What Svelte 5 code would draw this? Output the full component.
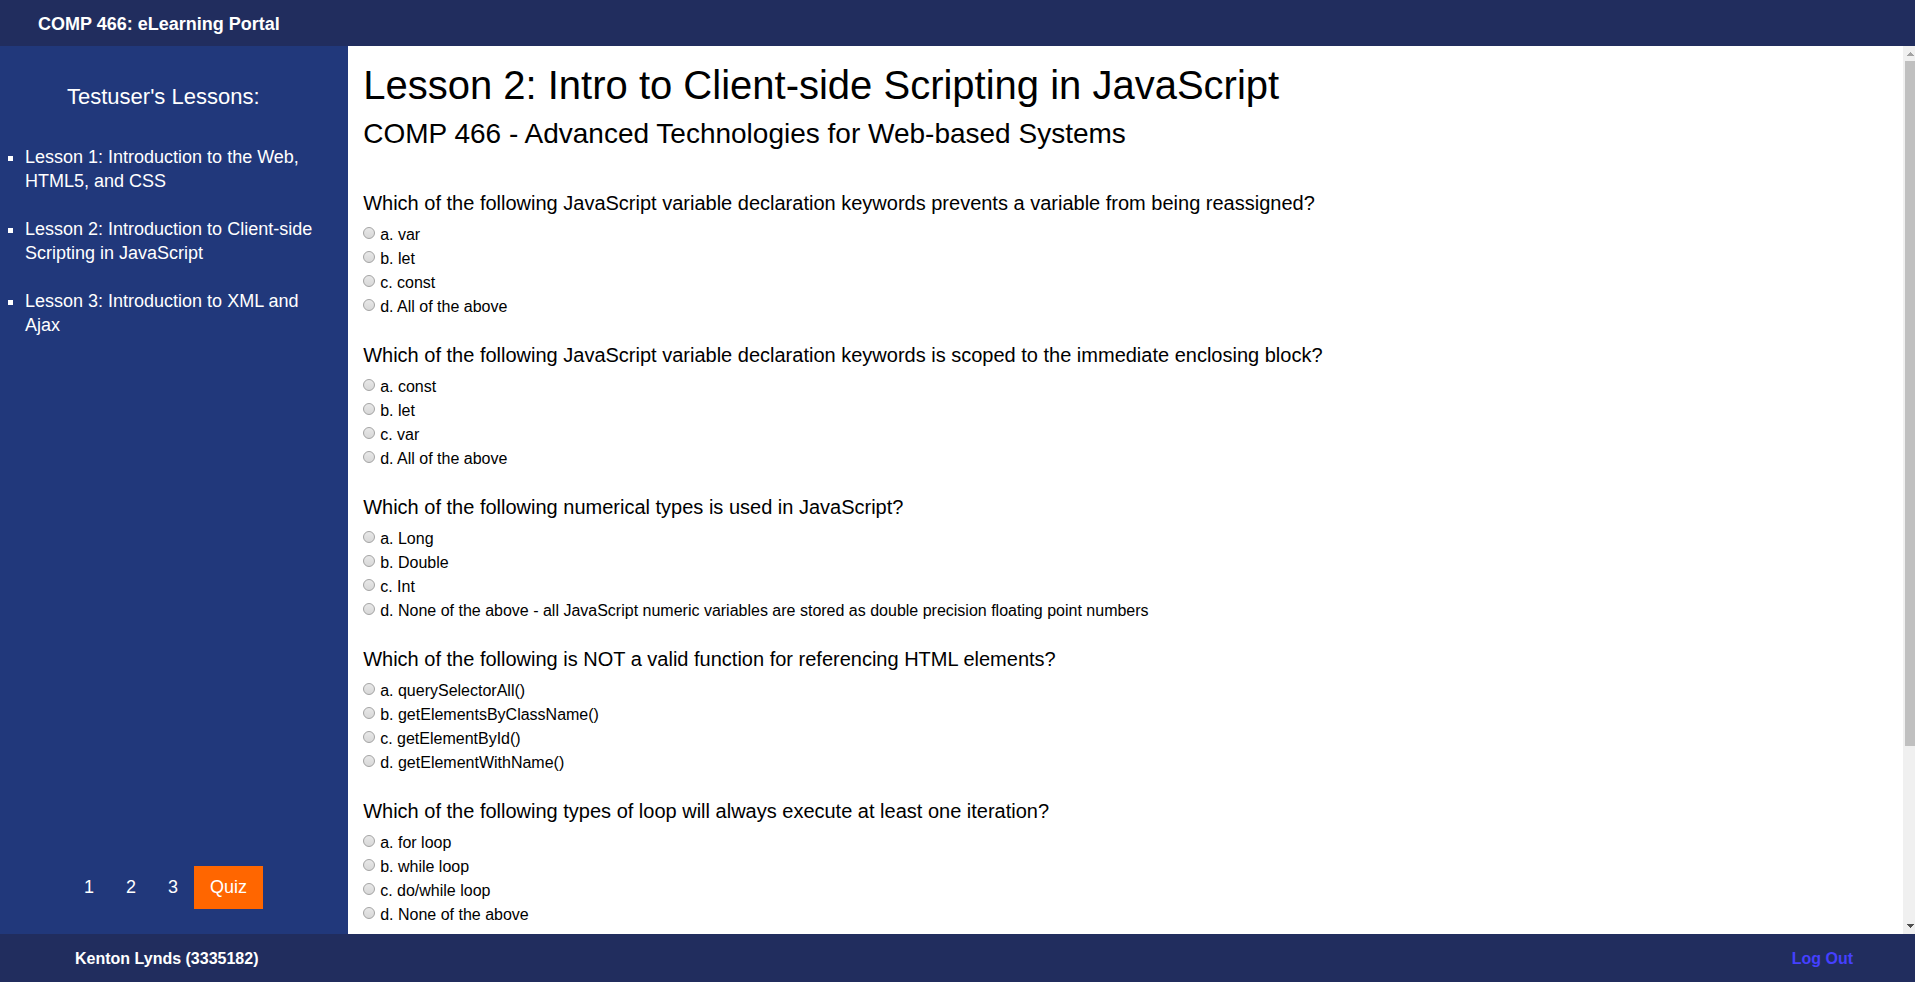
<script>
  const lessons = [
    'Lesson 1: Introduction to the Web, HTML5, and CSS',
    'Lesson 2: Introduction to Client-side Scripting in JavaScript',
    'Lesson 3: Introduction to XML and Ajax'
  ];

  const pages = ['1', '2', '3', 'Quiz'];
  const currentPage = 'Quiz';

  const questions = [
    {
      text: 'Which of the following JavaScript variable declaration keywords prevents a variable from being reassigned?',
      options: ['a. var', 'b. let', 'c. const', 'd. All of the above']
    },
    {
      text: 'Which of the following JavaScript variable declaration keywords is scoped to the immediate enclosing block?',
      options: ['a. const', 'b. let', 'c. var', 'd. All of the above']
    },
    {
      text: 'Which of the following numerical types is used in JavaScript?',
      options: [
        'a. Long',
        'b. Double',
        'c. Int',
        'd. None of the above - all JavaScript numeric variables are stored as double precision floating point numbers'
      ]
    },
    {
      text: 'Which of the following is NOT a valid function for referencing HTML elements?',
      options: ['a. querySelectorAll()', 'b. getElementsByClassName()', 'c. getElementById()', 'd. getElementWithName()']
    },
    {
      text: 'Which of the following types of loop will always execute at least one iteration?',
      options: ['a. for loop', 'b. while loop', 'c. do/while loop', 'd. None of the above']
    }
  ];
</script>

<div class="page">
  <header class="topbar">COMP 466: eLearning Portal</header>

  <div class="body">
    <aside class="sidebar">
      <h2 class="sidebar-title">Testuser's Lessons:</h2>
      <ul class="lessons">
        {#each lessons as lesson}
          <li><a href="#lesson">{lesson}</a></li>
        {/each}
      </ul>
      <nav class="pager">
        {#each pages as page}
          <a href="#page" class:active={page === currentPage}>{page}</a>
        {/each}
      </nav>
    </aside>

    <main class="content">
      <h1>Lesson 2: Intro to Client-side Scripting in JavaScript</h1>
      <h2>COMP 466 - Advanced Technologies for Web-based Systems</h2>
      <form>
        {#each questions as question, q}
          <fieldset>
            <legend>{question.text}</legend>
            {#each question.options as option, o}
              <label for={`q${q}-${o}`}>
                <input type="radio" id={`q${q}-${o}`} name={`q${q}`} value={o} />
                <span>{option}</span>
              </label>
            {/each}
          </fieldset>
        {/each}
      </form>
    </main>

    <div class="scrollbar" aria-hidden="true">
      <svg width="7" height="4" viewBox="0 0 7 4" shape-rendering="crispEdges">
        <path d="M3 0h1v1h1v1h1v1h1v1H0V3h1V2h1V1h1z" fill="#a3a3a3" />
      </svg>
      <div class="track"><div class="thumb"></div></div>
      <svg width="7" height="4" viewBox="0 0 7 4" shape-rendering="crispEdges">
        <path d="M0 0h7v1H6v1H5v1H4v1H3V3H2V2H1V1H0z" fill="#505050" />
      </svg>
    </div>
  </div>

  <footer class="bottombar">
    <span>Kenton Lynds (3335182)</span>
    <a href="#logout">Log Out</a>
  </footer>
</div>

<style>
  :global(body) {
    margin: 0;
  }

  .page {
    display: flex;
    flex-direction: column;
    height: 100vh;
    overflow: hidden;
    font-family: 'Liberation Sans', Arial, Helvetica, sans-serif;
    font-size: 16px;
    line-height: 24px;
    color: #000;
    background: #fff;
  }

  .topbar {
    padding: 12px 38px 10px;
    font-size: 18px;
    font-weight: bold;
    color: #fff;
    background: #212d5e;
  }

  .body {
    display: flex;
    flex: 1;
    min-height: 0;
  }

  .sidebar {
    display: flex;
    flex: none;
    flex-direction: column;
    width: calc(100% * 2 / 11);
    color: #fff;
    font-size: 18px;
    background: #21387b;
  }

  .sidebar a {
    color: inherit;
    text-decoration: none;
  }

  .sidebar-title {
    margin: 36px 0 33px 67px;
    font-size: 22px;
    font-weight: normal;
    line-height: 30px;
  }

  .lessons {
    display: flex;
    flex-direction: column;
    gap: 24px;
    margin: 0;
    padding: 0 20px 0 25px;
    list-style: square;
  }

  .pager {
    display: flex;
    margin: auto 0 25px 68px;
    line-height: 27px;
  }

  .pager a {
    padding: 8px 16px;
  }

  .pager .active {
    background: #f60;
  }

  .content {
    flex: 1;
    min-width: 0;
    padding: 15px;
    overflow-y: auto;
    scrollbar-width: none;
  }

  .content h1,
  .content h2 {
    margin: 0;
    font-weight: normal;
  }

  .content h1 {
    font-size: 40px;
    line-height: 48px;
  }

  .content h2 {
    margin: 7px 0 39px;
    font-size: 28px;
    line-height: 36px;
  }

  fieldset {
    display: flex;
    flex-direction: column;
    margin: 0 0 24px;
    padding: 0;
    border: 0;
  }

  legend {
    margin-bottom: 8px;
    padding: 0;
    font-size: 20px;
  }

  label {
    display: flex;
    align-items: flex-start;
    gap: 5px;
  }

  input {
    flex: none;
    appearance: none;
    box-sizing: border-box;
    width: 12px;
    height: 12px;
    margin: 4px 0 0;
    border: 1px solid #a3a3a3;
    border-radius: 50%;
    background: linear-gradient(#e8e8e8, #d8d8d8);
  }

  input:checked {
    background: radial-gradient(#444 3px, #dedede 4px);
  }

  .scrollbar {
    display: flex;
    flex: none;
    flex-direction: column;
    align-items: center;
    box-sizing: border-box;
    width: 12px;
    padding: 6px 0 6px 2px;
    background: #f0f0f0;
  }

  .track {
    align-self: stretch;
    flex: 1;
    margin: 5px 0;
  }

  .thumb {
    height: 79.8%;
    background: #c0c0c0;
  }

  .bottombar {
    display: flex;
    justify-content: space-between;
    padding: 13px 62px 11px 75px;
    font-weight: bold;
    color: #fff;
    background: #212d5e;
  }

  .bottombar a {
    color: #4540ff;
    text-decoration: none;
  }
</style>
